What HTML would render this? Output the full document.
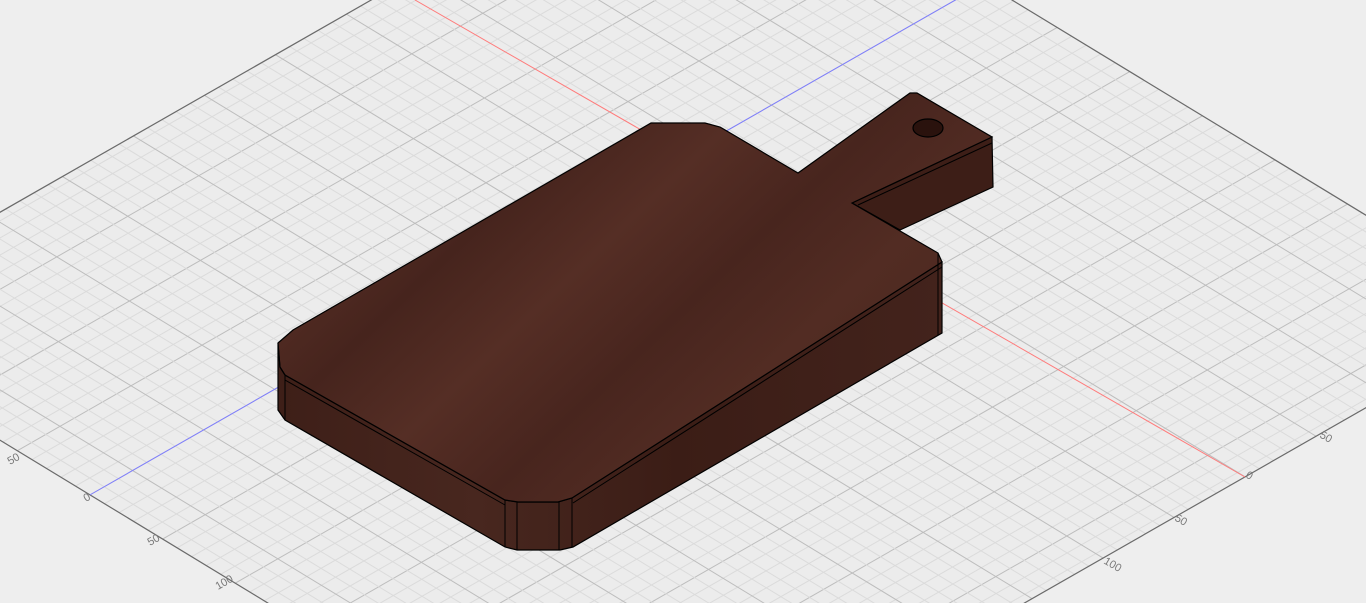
<!DOCTYPE html>
<html><head><meta charset="utf-8"><style>
html,body{margin:0;padding:0;background:#eeeeee;overflow:hidden}
svg{display:block}
text{font-family:"Liberation Sans",sans-serif;font-size:11px;fill:#7a7a7a}
</style></head><body>
<svg id="s" width="1366" height="603" viewBox="0 0 1366 603" xmlns="http://www.w3.org/2000/svg">
<defs>
<linearGradient id="wt" x1="0" y1="0" x2="1" y2="0.6">
<stop offset="0" stop-color="#4b271f"/>
<stop offset="0.2" stop-color="#562e25"/>
<stop offset="0.35" stop-color="#46241d"/>
<stop offset="0.5" stop-color="#552e25"/>
<stop offset="0.65" stop-color="#48251e"/>
<stop offset="0.8" stop-color="#522c23"/>
<stop offset="1" stop-color="#4a271f"/>
</linearGradient>
<linearGradient id="ws" x1="0" y1="0" x2="1" y2="0">
<stop offset="0" stop-color="#3e1f18"/>
<stop offset="0.3" stop-color="#48271f"/>
<stop offset="0.6" stop-color="#3b1d16"/>
<stop offset="1" stop-color="#43231c"/>
</linearGradient>
</defs>
<g id="grid"></g>
<line x1="415" y1="0" x2="1245" y2="477" stroke="#ff7b7b" stroke-width="1"/>
<g id="axes"></g>
<text transform="translate(10,465) rotate(-30)">50</text>
<text transform="translate(86,502) rotate(-30)">0</text>
<text transform="translate(150,546) rotate(-30)">50</text>
<text transform="translate(218,590) rotate(-30)">100</text>
<text transform="translate(1319,437) rotate(30)">50</text>
<text transform="translate(1245,477) rotate(30)">0</text>
<text transform="translate(1174,520) rotate(30)">50</text>
<text transform="translate(1103,563) rotate(30)">100</text>

<polygon points="852,203 992,137 993,187 900,230" fill="#3d1e17" stroke="#000" stroke-width="1.2"/>
<line x1="858" y1="205" x2="992" y2="143" stroke="#000" stroke-width="1"/>
<polygon points="278,343 278,410 285,420 505,547 517,550 560,550 573,547 942,333 942,262 572,498 558,502 518,502 505,500 285,375 280,367" fill="url(#ws)" stroke="#000" stroke-width="1.2"/>
<polygon points="278,343 293,330 651,123 705,123 720,127 798,173 910,93 917,93 992,137 852,203 938,253 942,262 572,498 558,502 518,502 505,500 285,375 280,367" fill="url(#wt)" stroke="#000" stroke-width="1.2"/>
<polyline points="278,343 280,367 285,375" fill="none" stroke="#000"/>
<line x1="285" y1="380" x2="505" y2="505" stroke="#000" stroke-width="1"/>
<line x1="573" y1="503" x2="942" y2="267" stroke="#000" stroke-width="1"/>
<line x1="285" y1="375" x2="285" y2="420" stroke="#000" stroke-width="1"/>
<line x1="505" y1="500" x2="505" y2="547" stroke="#000" stroke-width="1"/>
<line x1="517" y1="502" x2="517" y2="550" stroke="#000" stroke-width="1"/>
<line x1="559" y1="502" x2="559" y2="550" stroke="#000" stroke-width="1"/>
<line x1="572" y1="498" x2="572" y2="547" stroke="#000" stroke-width="1"/>
<line x1="938" y1="253" x2="938" y2="335" stroke="#000" stroke-width="1"/>
<ellipse cx="928" cy="128" rx="15" ry="9" fill="#2a120d" stroke="#000" stroke-width="1.2"/>
</svg>
<script>
var g=document.getElementById('grid'),ax=document.getElementById('axes'),ns='http://www.w3.org/2000/svg';
var C=[634.5,826],A=[-14.52,-8.83],B=[14.2,-8.12];
var PM=57,QM=63;
function P(p,q){return [C[0]+p*A[0]+q*B[0],C[1]+p*A[1]+q*B[1]];}
function L(par,a,b,col,w){var l=document.createElementNS(ns,'line');l.setAttribute('x1',a[0]);l.setAttribute('y1',a[1]);l.setAttribute('x2',b[0]);l.setAttribute('y2',b[1]);l.setAttribute('stroke',col);l.setAttribute('stroke-width',w);par.appendChild(l);}
var bg=document.createElementNS(ns,'polygon');
var c=[P(0,0),P(PM,0),P(PM,QM),P(0,QM)];
bg.setAttribute('points',c.map(function(x){return x.join(',')}).join(' '));
bg.setAttribute('fill','#ececec');g.appendChild(bg);
for(var i=0;i<PM;i++){var p=i+0.5,major=((i-37)%5===0);L(g,P(p,0),P(p,QM),major?'#bdbdbd':'#dbdbdb',1);}
for(var q=1;q<QM;q++){var mq=((q-43)%5===0);L(g,P(0,q),P(PM,q),mq?'#bdbdbd':'#dbdbdb',1);}
for(var k=0;k<4;k++)L(g,c[k],c[(k+1)%4],'#6a6a6a',1.2);
L(ax,P(37.5,0),P(37.5,QM),'#7d7dff',1);
</script>
</body></html>
